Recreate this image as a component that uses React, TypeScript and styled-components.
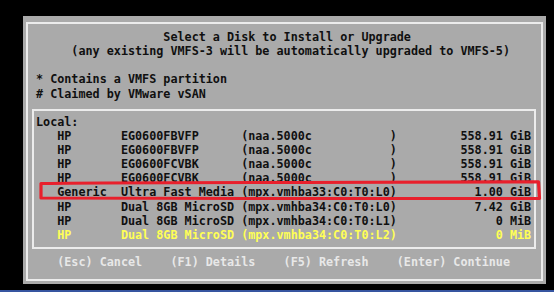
import React from "react";
import styled, { createGlobalStyle } from "styled-components";

const Global = createGlobalStyle`
  html, body { margin: 0; padding: 0; background: #000; }
  #root { width: 554px; height: 292px; }
`;

const Screen = styled.div`
  position: relative;
  width: 554px;
  height: 292px;
  background: #000;
  display: flex;
  flex-direction: column;
  overflow: hidden;
  font-family: "DejaVu Sans Mono", "Liberation Mono", monospace;
  font-size: 11.76px;
  font-weight: bold;
  line-height: 14.125px;
`;

const Panel = styled.div`
  box-sizing: border-box;
  margin: 16px 8px 0 23px;
  height: 268px;
  background: #aaaaaa;
  padding: 6px 3px 3px 3px;
  display: flex;
`;

const Frame = styled.div`
  flex: 1;
  box-sizing: border-box;
  border: 2px solid #ececec;
  padding: 6px 5px 0 0;
  display: flex;
  flex-direction: column;
`;

const Line = styled.div<{ $tone?: "dark" | "light" | "yellow" }>`
  white-space: pre;
  height: 14.125px;
  padding-left: 8px;
  color: ${(p) =>
    p.$tone === "light" ? "#e8e8e8" : p.$tone === "yellow" ? "#ffff55" : "#101010"};
`;

const DiskList = styled.div`
  margin: 8.4px 0 6px 4px;
  border: 2px solid #ececec;
  padding: 3.75px 0 5.1px 2px;
`;

const Row = styled.div<{ $selected?: boolean }>`
  white-space: pre;
  height: 14.125px;
  color: ${(p) => (p.$selected ? "#ffff55" : "#101010")};
`;

const BottomGap = styled.div`
  flex: 1;
`;

const TaskStrip = styled.div`
  height: 2px;
  background: #3655a0;
`;

const Annotation = styled.svg`
  position: absolute;
  left: 0;
  top: 0;
  width: 554px;
  height: 292px;
  pointer-events: none;
`;

type Disk = { vendor: string; model: string; id: string; size: string; selected?: boolean };

const disks: Disk[] = [
  { vendor: "HP", model: "EG0600FBVFP", id: "(naa.5000c           )", size: "558.91 GiB" },
  { vendor: "HP", model: "EG0600FBVFP", id: "(naa.5000c           )", size: "558.91 GiB" },
  { vendor: "HP", model: "EG0600FCVBK", id: "(naa.5000c           )", size: "558.91 GiB" },
  { vendor: "HP", model: "EG0600FCVBK", id: "(naa.5000c           )", size: "558.91 GiB" },
  { vendor: "Generic", model: "Ultra Fast Media", id: "(mpx.vmhba33:C0:T0:L0)", size: "1.00 GiB" },
  { vendor: "HP", model: "Dual 8GB MicroSD", id: "(mpx.vmhba34:C0:T0:L0)", size: "7.42 GiB" },
  { vendor: "HP", model: "Dual 8GB MicroSD", id: "(mpx.vmhba34:C0:T0:L1)", size: "0 MiB" },
  { vendor: "HP", model: "Dual 8GB MicroSD", id: "(mpx.vmhba34:C0:T0:L2)", size: "0 MiB", selected: true },
];

const fmt = (d: Disk) =>
  "   " + d.vendor.padEnd(9) + d.model.padEnd(17) + d.id + d.size.padStart(19);

export default function App() {
  return (
    <>
      <Global />
      <Screen>
        <Panel>
          <Frame>
            <Line>{"                  Select a Disk to Install or Upgrade"}</Line>
            <Line>{"     (any existing VMFS-3 will be automatically upgraded to VMFS-5)"}</Line>
            <Line> </Line>
            <Line>{"* Contains a VMFS partition"}</Line>
            <Line>{"# Claimed by VMware vSAN"}</Line>
            <DiskList>
              <Row>Local:</Row>
              {disks.map((d, i) => (
                <Row key={i} $selected={d.selected}>
                  {fmt(d)}
                </Row>
              ))}
            </DiskList>
            <Line $tone="light">
              {"   (Esc) Cancel    (F1) Details    (F5) Refresh    (Enter) Continue"}
            </Line>
          </Frame>
        </Panel>
        <BottomGap />
        <TaskStrip />
        <Annotation viewBox="0 0 554 292">
          <path
            d="M41 183.5 Q120 182.5 300 182.5 T538.5 181.8 L539.5 198.5 Q400 199 250 198.5 T41 198 Z"
            fill="none"
            stroke="#e8202c"
            strokeWidth="3.2"
            strokeLinejoin="round"
          />
        </Annotation>
      </Screen>
    </>
  );
}
